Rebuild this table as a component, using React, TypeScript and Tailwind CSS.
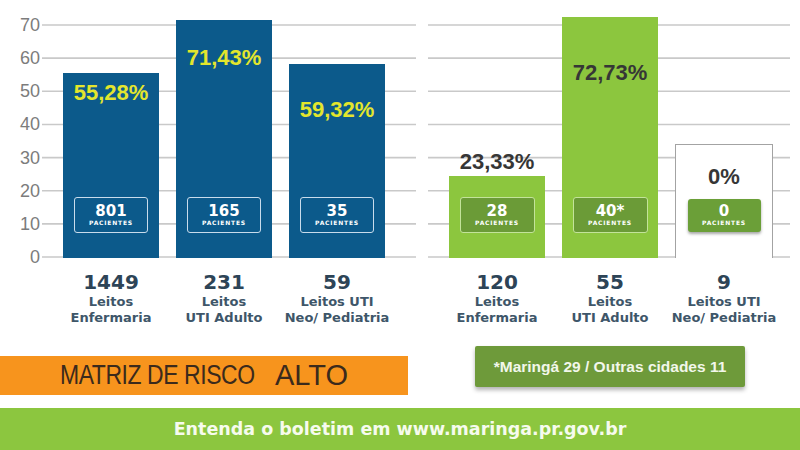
import React from 'react';

type Bar = {
  value: number;
  height: number;
  pct: string;
  pctTop: number;
  count: string;
  beds: string;
  label1: string;
  label2: string;
};

const PX = 3.314;

const LEFT_BARS: Bar[] = [
  { value: 55.28, height: 185, pct: '55,28%', pctTop: 8, count: '801', beds: '1449', label1: 'Leitos', label2: 'Enfermaria' },
  { value: 71.43, height: 238, pct: '71,43%', pctTop: 26, count: '165', beds: '231', label1: 'Leitos', label2: 'UTI Adulto' },
  { value: 59.32, height: 194, pct: '59,32%', pctTop: 34, count: '35', beds: '59', label1: 'Leitos UTI', label2: 'Neo/ Pediatria' },
];

const RIGHT_BARS: Bar[] = [
  { value: 23.33, height: 82, pct: '23,33%', pctTop: 0, count: '28', beds: '120', label1: 'Leitos', label2: 'Enfermaria' },
  { value: 72.73, height: 241, pct: '72,73%', pctTop: 44, count: '40*', beds: '55', label1: 'Leitos', label2: 'UTI Adulto' },
  { value: 0, height: 114, pct: '0%', pctTop: 20, count: '0', beds: '9', label1: 'Leitos UTI', label2: 'Neo/ Pediatria' },
];

const TICKS = [70, 60, 50, 40, 30, 20, 10, 0];

function CountBox({ count, variant }: { count: string; variant: 'blue' | 'green' | 'solid' }) {
  const cls =
    variant === 'blue'
      ? 'border-[1.5px] border-[#c9dcec] w-[74px] h-[36px]'
      : variant === 'green'
        ? 'border-[1.5px] border-[#c3e39a] bg-[#6b9b37] w-[75px] h-[36px]'
        : 'bg-[#6b9f38] w-[73px] h-[33px] shadow-[0_2px_3px_rgba(0,0,0,0.35)]';
  return (
    <div className={`${cls} rounded-[3px] flex flex-col items-center justify-center text-white`}>
      <span className="font-['DejaVu_Sans',sans-serif] font-bold text-[15px] leading-[15px]">{count}</span>
      <span className="font-['DejaVu_Sans',sans-serif] font-bold text-[6px] leading-[8px] tracking-[0.8px]">PACIENTES</span>
    </div>
  );
}

function BarLabel({ bar, wide }: { bar: Bar; wide?: boolean }) {
  return (
    <div className={`${wide ? 'w-[98px]' : 'w-[96px]'} flex flex-col items-center whitespace-nowrap font-['DejaVu_Sans',sans-serif] font-bold`}>
      <span className="text-[20px] leading-[24px] text-[#2d4457]">{bar.beds}</span>
      <span className="text-[13px] leading-[16px] text-[#3e5669]">{bar.label1}</span>
      <span className="text-[13px] leading-[16px] text-[#3e5669]">{bar.label2}</span>
    </div>
  );
}

export default function App() {
  return (
    <div className="w-[800px] h-[450px] bg-white overflow-hidden flex flex-col font-['Liberation_Sans',Arial,sans-serif]">
      {/* Chart */}
      <div className="relative h-[258px] shrink-0">
        {/* grid lines */}
        <svg className="absolute inset-0" width="800" height="258">
          {TICKS.map((t) => {
            const y = 257 - t * PX;
            return (
              <g key={t}>
                <line x1="42" x2="416" y1={y} y2={y} stroke="#c9c9c9" strokeWidth="1.6" />
                <line x1="428" x2="790" y1={y} y2={y} stroke="#c9c9c9" strokeWidth="1.6" />
              </g>
            );
          })}
        </svg>
        {/* axis labels */}
        {TICKS.map((t) => (
          <span
            key={t}
            className="absolute left-0 w-[40px] text-right text-[18px] leading-[18px] text-[#7c7c7c]"
            style={{ top: 257 - t * PX - 9 }}
          >
            {t}
          </span>
        ))}

        <div className="relative h-full flex items-end pl-[63px]">
          {/* left group */}
          <div className="flex items-end gap-[17px]">
            {LEFT_BARS.map((b) => (
              <div
                key={b.pct}
                className="w-[96px] bg-[#0c5a8b] flex flex-col items-center pb-[25px]"
                style={{ height: b.height }}
              >
                <span
                  className="font-bold text-[22px] leading-[24px] text-[#e3e62d]"
                  style={{ marginTop: b.pctTop }}
                >
                  {b.pct}
                </span>
                <div className="mt-auto">
                  <CountBox count={b.count} variant="blue" />
                </div>
              </div>
            ))}
          </div>

          {/* right group */}
          <div className="flex items-end gap-[17px] ml-[64px]">
            <div className="w-[96px] flex flex-col items-center">
              <span className="font-bold text-[22px] leading-[24px] text-[#363636] mb-[2px]">{RIGHT_BARS[0].pct}</span>
              <div
                className="w-full bg-[#8cc63e] flex flex-col items-center justify-end pb-[25px]"
                style={{ height: RIGHT_BARS[0].height }}
              >
                <CountBox count={RIGHT_BARS[0].count} variant="green" />
              </div>
            </div>
            <div
              className="w-[96px] bg-[#8cc63e] flex flex-col items-center pb-[25px]"
              style={{ height: RIGHT_BARS[1].height }}
            >
              <span className="font-bold text-[22px] leading-[24px] text-[#363636] mt-[44px]">{RIGHT_BARS[1].pct}</span>
              <div className="mt-auto">
                <CountBox count={RIGHT_BARS[1].count} variant="green" />
              </div>
            </div>
            <div
              className="w-[98px] bg-white border border-[#a3a3a3] border-b-0 flex flex-col items-center pb-[26px]"
              style={{ height: RIGHT_BARS[2].height }}
            >
              <span className="font-bold text-[22px] leading-[24px] text-[#363636] mt-[20px]">{RIGHT_BARS[2].pct}</span>
              <div className="mt-auto">
                <CountBox count={RIGHT_BARS[2].count} variant="solid" />
              </div>
            </div>
          </div>
        </div>
      </div>

      {/* Bed labels */}
      <div className="flex pl-[63px] mt-[12px]">
        <div className="flex gap-[17px]">
          {LEFT_BARS.map((b) => (
            <BarLabel key={b.beds} bar={b} />
          ))}
        </div>
        <div className="flex gap-[17px] ml-[64px]">
          {RIGHT_BARS.map((b, i) => (
            <BarLabel key={b.beds} bar={b} wide={i === 2} />
          ))}
        </div>
      </div>

      {/* Risk row */}
      <div className="flex items-start mt-[20px]">
        <div className="w-[408px] h-[39px] mt-[10px] bg-[#f7941d] flex items-center pl-[60px] text-[#3b2a1c]">
          <span className="text-[27px] leading-none tracking-[-0.5px] scale-x-[0.85] origin-left whitespace-nowrap">MATRIZ DE RISCO</span>
          <span className="text-[29px] leading-none ml-[-14px] whitespace-nowrap">ALTO</span>
        </div>
        <div className="ml-[67px] w-[270px] h-[41px] bg-[#6e9a3a] rounded-[2px] shadow-[0_3px_4px_rgba(0,0,0,0.3)] flex items-center justify-center">
          <span className="font-bold text-[15.5px] text-[#f2f7ea] whitespace-nowrap">*Maringá 29 / Outras cidades 11</span>
        </div>
      </div>

      {/* Footer band */}
      <div className="mt-auto h-[42px] bg-[#8cc63f] flex items-center justify-center">
        <span className="font-['DejaVu_Sans',sans-serif] font-bold text-[17.5px] text-[#f6fbee] whitespace-nowrap">
          Entenda o boletim em www.maringa.pr.gov.br
        </span>
      </div>
    </div>
  );
}
